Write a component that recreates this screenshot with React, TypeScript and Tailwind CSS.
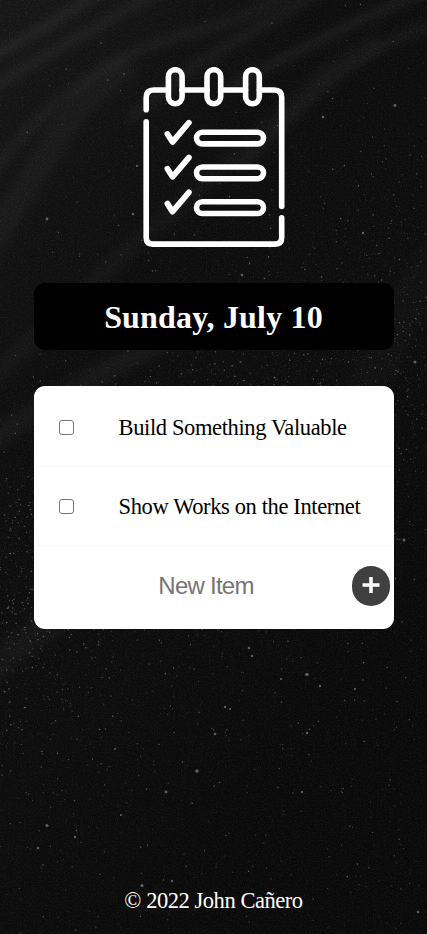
import React, { useState } from "react";

const SERIF = "font-['Liberation_Serif',serif]";
const SANS = "font-['Liberation_Sans',sans-serif]";

type Grain = { x: number; y: number; r: number; o: number };

// Sand is finest in a diagonal band crossing the middle of the page.
function makeGrains(count: number): Grain[] {
  let seed = 4217;
  const rand = () => {
    seed = (seed * 16807) % 2147483647;
    return seed / 2147483647;
  };
  const grains: Grain[] = [];
  while (grains.length < count) {
    const x = rand() * 427;
    const y = rand() * 934;
    const ridge = 600 - x * 0.65;
    const density = Math.exp(-(((y - ridge) / 140) ** 2)) + (y > ridge ? 0.14 : 0.04);
    const pick = rand();
    const shade = rand();
    if (pick < density) grains.push({ x, y, r: 0.35 + shade * 0.4, o: 0.07 + shade ** 4 * 0.3 });
  }
  return grains;
}

const grains = makeGrains(6500);

const ridges: [string, number, number][] = [
  ["M-30 66 C40 36 80 0 140 -30", 8, 0.07],
  ["M-30 105 C25 62 70 45 100 25 S160 -5 200 -30", 6, 0.08],
  ["M-40 210 C30 120 90 60 180 36 S270 2 330 -30", 8, 0.05],
  ["M130 120 C200 50 275 25 350 -30", 8, 0.05],
  ["M230 86 C300 50 350 24 450 -20", 7, 0.07],
  ["M240 170 C320 80 370 40 460 16", 9, 0.045],
  ["M-40 290 C40 180 55 110 130 64", 24, 0.03],
  ["M-30 400 C120 250 200 190 260 135 S310 80 380 40", 18, 0.025],
  ["M-50 470 C60 390 110 370 240 300", 20, 0.035],
  ["M-50 700 C25 645 60 600 200 560", 28, 0.03],
  ["M330 470 C380 350 410 290 480 200", 40, 0.015],
];

const specks = [
  [47, 825.5, 1.6], [197, 771, 1.8], [166, 792, 1.4], [142, 885.5, 1.6], [307, 674.5, 1.8],
  [75, 837, 1.2], [38, 848, 1.3], [121, 815, 1.1], [215, 734, 1.3], [307, 733, 1.2],
  [302, 792, 1.2], [115, 749, 1], [249, 648, 1.3], [252, 656, 1.2], [225, 707, 1.2],
  [230, 709, 1.1], [418, 912, 1.3], [172, 881, 1.2], [395, 105.5, 1.4], [323, 117, 1.3],
  [133, 214, 1.2], [47, 219, 1.4], [363, 233, 1.2], [242, 275, 1.3], [137, 166, 1.1],
  [281, 679, 1.1], [320, 686, 1.2], [355, 689, 1.1], [415, 362, 1.5], [404, 540, 1.5],
];

function SandBackdrop() {
  return (
    <svg className="absolute inset-0 h-full w-full" viewBox="0 0 427 934" preserveAspectRatio="none" aria-hidden="true">
      <defs>
        <linearGradient id="base" x1="0" y1="0" x2="0.6" y2="1">
          <stop offset="0" stopColor="#161616" />
          <stop offset="0.35" stopColor="#0d0d0d" />
          <stop offset="0.6" stopColor="#0c0c0c" />
          <stop offset="1" stopColor="#090909" />
        </linearGradient>
        <filter id="soft" filterUnits="userSpaceOnUse" x="-60" y="-60" width="547" height="1054">
          <feGaussianBlur stdDeviation="5" />
        </filter>
        <filter id="noise" filterUnits="userSpaceOnUse" x="0" y="0" width="427" height="934">
          <feTurbulence type="fractalNoise" baseFrequency="0.75" numOctaves="2" seed="8" />
          <feColorMatrix values="0 0 0 0 1  0 0 0 0 1  0 0 0 0 1  0.8 0.8 0 0 -0.72" />
        </filter>
      </defs>
      <rect width="427" height="934" fill="url(#base)" />
      <g fill="none" stroke="#fff" filter="url(#soft)">
        {ridges.map(([d, w, o]) => (
          <path key={d} d={d} strokeWidth={w} strokeOpacity={o} />
        ))}
      </g>
      <rect width="427" height="934" filter="url(#noise)" opacity="0.14" />
      <g fill="#fff">
        {grains.map((g, i) => (
          <circle key={i} cx={g.x} cy={g.y} r={g.r} fillOpacity={g.o} />
        ))}
        {specks.map(([x, y, r]) => (
          <circle key={`${x}-${y}`} cx={x} cy={y} r={r} fillOpacity={0.34} />
        ))}
      </g>
    </svg>
  );
}

function NotepadLogo() {
  return (
    <svg className="h-[180px] w-[142px]" viewBox="142.5 67 142 180" fill="none" stroke="#fff" strokeWidth="5.6" strokeLinecap="round" strokeLinejoin="round" aria-hidden="true">
      <g transform="translate(-0.5 0)">
        <path d="M146.200 109.800V97.500Q146.200 90 153.700 90H168M182 90H207M221 90H245.500M259.500 90H274Q281.700 90 281.700 97.500V206.500" />
        <path d="M146.200 121.800V237.500Q146.200 244.100 152.800 244.100H275.100Q281.700 244.100 281.700 237.500V217.900" />
        {[168.4, 207, 245.6].map((x) => (
          <rect key={x} x={x} y="69.700" width="13.700" height="34" rx="6.850" />
        ))}
        {[0, 34.8, 69.6].map((dy) => (
          <g key={dy} transform={`translate(0 ${dy})`}>
            <path d="M167.400 134L172.500 142L188.900 122.700" strokeWidth="5.8" />
            <rect x="196.500" y="132.200" width="67" height="11.700" rx="5.850" />
          </g>
        ))}
      </g>
    </svg>
  );
}

function TodoRow({ label }: { label: string }) {
  const [done, setDone] = useState(false);
  return (
    <label className="flex h-[79px] items-center border-b border-[#f8f8f8]">
      <input
        type="checkbox"
        checked={done}
        onChange={() => setDone(!done)}
        className="ml-[22px] h-[15px] w-[15px] shrink-0 appearance-none rounded-[3px] border border-[#767676] bg-white checked:bg-[#767676]"
      />
      <span className={`ml-[45px] mt-[2px] whitespace-nowrap text-[22.500px] leading-7 tracking-[-0.37px] text-black ${done ? "line-through" : ""}`}>{label}</span>
    </label>
  );
}

export default function App() {
  return (
    <div className={`relative h-[934px] w-full overflow-hidden bg-[#0e0e0e] ${SERIF}`}>
      <SandBackdrop />
      <div className="relative flex h-full flex-col items-center pt-[67px]">
        <NotepadLogo />
        <header className="mt-9 flex h-[67px] w-[360px] items-center justify-center rounded-[11px] bg-black">
          <h1 className="whitespace-nowrap text-[32px] font-bold leading-9 tracking-[0.17px] text-white">Sunday, July 10</h1>
        </header>
        <main className="mt-9 h-[243px] w-[360px] rounded-[11px] bg-white px-[3px] pt-[2px]">
          <TodoRow label="Build Something Valuable" />
          <TodoRow label="Show Works on the Internet" />
          <form className="flex h-[79px] items-center" onSubmit={(e) => e.preventDefault()}>
            <input
              placeholder="New Item"
              className={`h-[60px] min-w-0 flex-1 bg-transparent pl-[24px] text-center text-[24px] tracking-[-0.75px] text-black outline-none placeholder:text-[#757575] ${SANS}`}
            />
            <button aria-label="Add item" className="mr-px flex h-[40px] w-[38px] shrink-0 items-center justify-center rounded-full bg-[#404040] pb-px">
              <svg className="h-[18px] w-[18px]" viewBox="0 0 18 18" stroke="#fff" strokeWidth="3.500" aria-hidden="true">
                <path d="M0.500 9H17.500M9 1V17" />
              </svg>
            </button>
          </form>
        </main>
        <footer className="mt-auto mb-[19px] whitespace-nowrap text-[22.500px] leading-7 tracking-[-0.45px] text-white">© 2022 John Cañero</footer>
      </div>
    </div>
  );
}
